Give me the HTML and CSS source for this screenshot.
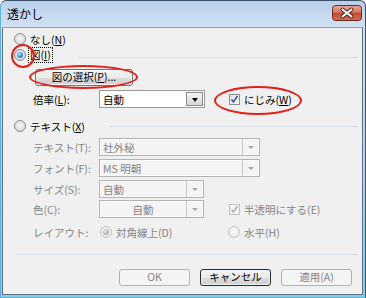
FILE: index.html
```html
<!DOCTYPE html>
<html lang="ja">
<head>
<meta charset="utf-8">
<title>透かし</title>
<link rel="stylesheet" href="styles.css">
</head>
<body>
<div class="window">
  <div class="titlebar">
    <span class="title">透かし</span>
    <span class="close">
      <svg width="30" height="16" viewBox="0 0 30 16">
        <defs>
          <linearGradient id="cg" x1="0" y1="0" x2="0" y2="1">
            <stop offset="0" stop-color="#eaa99b"/>
            <stop offset="0.45" stop-color="#d67864"/>
            <stop offset="0.5" stop-color="#c64632"/>
            <stop offset="1" stop-color="#d8705a"/>
          </linearGradient>
        </defs>
        <rect x="0.5" y="0.5" width="29" height="15" rx="3" fill="url(#cg)" stroke="#6a2a20"/>
        <path d="M10.5 4.5 L19.5 11.5 M19.5 4.5 L10.5 11.5" stroke="#4a1a12" stroke-width="4" stroke-linecap="round"/>
        <path d="M10.5 4.5 L19.5 11.5 M19.5 4.5 L10.5 11.5" stroke="#fff" stroke-width="2.2" stroke-linecap="round"/>
      </svg>
    </span>
  </div>
  <div class="client">
    <div class="row r-none">
      <span class="radio"></span><span>なし(<u>N</u>)</span>
    </div>
    <div class="row r-pic">
      <span class="radio checked"></span><span class="focus">図(<u>I</u>)</span><span class="line"></span>
    </div>
    <div class="row r-btn">
      <span class="btn pick">図の選択(<u>P</u>)...</span>
    </div>
    <div class="row r-scale">
      <span class="lbl">倍率(<u>L</u>):</span>
      <span class="combo c-scale"><span class="val">自動</span><span class="drop"><span class="arrow"></span></span></span>
      <span class="check checked c-blur"><svg width="9" height="9" viewBox="0 0 9 9"><path d="M1.5 4.5 L3.5 7 L7.5 1" fill="none" stroke="#3c5aa0" stroke-width="1.6"/></svg></span><span>にじみ(<u>W</u>)</span>
    </div>
    <div class="row r-text">
      <span class="radio"></span><span>テキスト(<u>X</u>)</span><span class="line"></span>
    </div>
    <div class="row rc r-t1 dis">
      <span class="lbl">テキスト(T):</span>
      <span class="combo dcombo wide"><span class="val">社外秘</span><span class="drop"><span class="arrow"></span></span></span>
    </div>
    <div class="row rc r-t2 dis">
      <span class="lbl">フォント(F):</span>
      <span class="combo dcombo wide"><span class="val">MS 明朝</span><span class="drop"><span class="arrow"></span></span></span>
    </div>
    <div class="row rc r-t3 dis">
      <span class="lbl">サイズ(S):</span>
      <span class="combo dcombo narrow"><span class="val">自動</span><span class="drop"><span class="arrow"></span></span></span>
    </div>
    <div class="row rc r-t4 dis">
      <span class="lbl">色(C):</span>
      <span class="combo dcombo narrow color"><span class="val">自動</span><span class="drop"><span class="arrow"></span></span></span>
      <span class="check checked disabled c-semi"><svg width="9" height="9" viewBox="0 0 9 9"><path d="M1.5 4.5 L3.5 7 L7.5 1" fill="none" stroke="#b4b4b4" stroke-width="1.6"/></svg></span><span>半透明にする(E)</span>
    </div>
    <div class="row r-layout dis">
      <span class="lbl">レイアウト:</span>
      <span class="opt opt-diag"><span class="radio disabled checked"></span><span>対角線上(D)</span></span>
      <span class="opt"><span class="radio disabled"></span><span>水平(H)</span></span>
    </div>
    <div class="sep-bottom"></div>
    <div class="buttons">
      <span class="btn disabled">OK</span>
      <span class="btn default">キャンセル</span>
      <span class="btn disabled">適用(A)</span>
    </div>
  </div>
  <span class="ring ring-radio"></span>
  <span class="ring ring-btn"></span>
  <span class="ring ring-check"></span>
</div>
</body>
</html>
```
FILE: styles.css
```css
* { box-sizing: border-box; }
html, body { margin: 0; padding: 0; background: #fff; }
body {
  font-family: "Noto Sans CJK JP", "Noto Sans", sans-serif;
  font-size: 10.5px;
  color: #000;
}
u { text-decoration: underline; text-underline-offset: 1px; }

.window {
  position: relative;
  width: 366px;
  height: 298px;
  display: flex;
  flex-direction: column;
  background: linear-gradient(#b9d0ea 0, #d3e2f3 27px, #c4d7ee 120px, #8ccbe6 100%);
  border: 1px solid #3e5068;
  border-bottom-color: #4cc0e0;
  border-left-color: #5fb0d6;
  border-radius: 6px 6px 0 0;
  padding: 0 2px 2px 1px;
}

.titlebar {
  height: 26px;
  display: flex;
  align-items: center;
  justify-content: space-between;
  flex: none;
}
.title {
  font-size: 12px;
  padding-left: 5px;
  line-height: 1;
}
.close {
  align-self: flex-start;
  margin-top: 4px;
  margin-right: 1px;
  width: 30px;
  height: 16px;
  display: block;
}
.close svg { display: block; }

.client {
  flex: 1;
  background: #f0f0f0;
  border: 1px solid #5a6f88;
  border-top-color: #8aa0ba;
  padding-top: 3px;
  display: flex;
  flex-direction: column;
}

.row {
  display: flex;
  align-items: center;
  height: 16px;
  flex: none;
  white-space: nowrap;
}
.rc { height: 18px; }
.r-btn { height: 17px; margin-top: 6px; }
.r-scale { height: 18px; margin-top: 4px; }
.r-text { margin-top: 10px; }
.r-t1 { margin-top: 4px; }
.r-t2 { margin-top: 3px; }
.r-t3 { margin-top: 3px; }
.r-t4 { margin-top: 2px; }
.r-layout { margin-top: 6px; }

.dis { color: #858585; }

.radio {
  flex: none;
  position: relative;
  width: 12px;
  height: 12px;
  border-radius: 50%;
  border: 1px solid #8e8f8f;
  background: radial-gradient(circle at 50% 45%, #f4f4f4 0, #e2e2e2 55%, #c6c6c6 100%);
  margin-left: 11px;
  margin-right: 4px;
}
.radio.checked::after {
  content: "";
  position: absolute;
  left: 2px;
  top: 2px;
  width: 6px;
  height: 6px;
  border-radius: 50%;
  background: radial-gradient(circle at 40% 35%, #c8f0ff 0, #3aa0e4 45%, #0e4f94 100%);
}
.radio.disabled {
  border-color: #c2c2c2;
  background: radial-gradient(circle at 50% 45%, #fafafa 0, #eeeeee 60%, #dedede 100%);
}
.radio.disabled.checked::after {
  background: radial-gradient(circle at 40% 35%, #e6e6e6 0, #b3b3b3 60%, #9a9a9a 100%);
}

.focus {
  outline: 1px dotted #000;
  outline-offset: 0;
  padding: 0 1px;
  margin-left: -1px;
  line-height: 14px;
}
.line {
  flex: 1;
  height: 1px;
  background: #d5dfe5;
  margin-left: 27px;
  margin-right: 5px;
  margin-top: 4px;
}
.r-text .line { margin-left: 24px; margin-top: 0; }

.btn {
  display: flex;
  align-items: center;
  justify-content: center;
  height: 17px;
  border: 1px solid #707070;
  border-radius: 3px;
  background: linear-gradient(#f3f3f3 0, #ebebeb 50%, #dddddd 51%, #cfcfcf 100%);
  box-shadow: inset 0 0 0 1px #fbfbfb;
  line-height: 1;
  white-space: nowrap;
}
.pick { width: 98px; margin-left: 32px; }

.lbl {
  flex: none;
  width: 66px;
  margin-left: 30px;
}

.combo {
  flex: none;
  display: flex;
  height: 18px;
  border: 1px solid #a8a8a8;
  background: #fff;
}
.combo .val {
  flex: 1;
  padding-left: 3px;
  display: flex;
  align-items: center;
}
.combo .drop {
  width: 17px;
  display: flex;
  align-items: center;
  justify-content: center;
}
.c-scale { width: 106px; border-color: #9a9a9a; }
.c-scale .drop {
  margin: 1px;
  border: 1px solid #8a8a8a;
  background: linear-gradient(#f4f4f4, #d8d8d8);
}
.c-scale .arrow {
  width: 0; height: 0;
  border-left: 3.5px solid transparent;
  border-right: 3.5px solid transparent;
  border-top: 4px solid #000;
  margin-top: 1px;
}

.dcombo {
  border-color: #b3b3b3;
  background: #f4f4f4;
  box-shadow: inset 0 0 0 1px #fcfcfc;
  color: #858585;
}
.dcombo .drop { border-left: 1px solid #c9c9c9; }
.dcombo .arrow {
  width: 0; height: 0;
  border-left: 3px solid transparent;
  border-right: 3px solid transparent;
  border-top: 3px solid #a6a6a6;
}
.wide { width: 161px; }
.narrow { width: 105px; }
.color .val { justify-content: center; padding-left: 0; }

.check {
  flex: none;
  width: 11px;
  height: 11px;
  border: 1px solid #8e8f8f;
  background: linear-gradient(135deg, #dedede, #fafafa);
  display: flex;
  align-items: center;
  justify-content: center;
  margin-right: 4px;
}
.check svg { display: block; }
.check.disabled { border-color: #c2c2c2; background: #f4f4f4; }
.c-blur { margin-left: 24px; }
.c-semi { margin-left: 25px; }

.opt { display: flex; align-items: center; }
.opt-diag { width: 128px; }
.opt .radio { margin-left: 1px; }

.sep-bottom {
  height: 1px;
  background: #d5dfe5;
  margin: 14px 5px 0 13px;
  flex: none;
}

.buttons {
  display: flex;
  justify-content: flex-end;
  gap: 10px;
  padding-right: 10px;
  margin-top: 14px;
}
.buttons .btn { width: 71px; }
.btn.disabled {
  border-color: #adb2b5;
  background: #f4f4f4;
  box-shadow: none;
  color: #838383;
}
.btn.default {
  border-color: #2c2c2c;
  box-shadow: inset 0 0 0 1px #e8f4fc;
}

.ring {
  position: absolute;
  border: 2px solid #e3211b;
  border-radius: 50%;
  pointer-events: none;
}
.ring-radio { left: 10px; top: 43px; width: 24px; height: 24px; }
.ring-btn { left: 28px; top: 64px; width: 109px; height: 24px; }
.ring-check { left: 213px; top: 85px; width: 88px; height: 29px; }
```
